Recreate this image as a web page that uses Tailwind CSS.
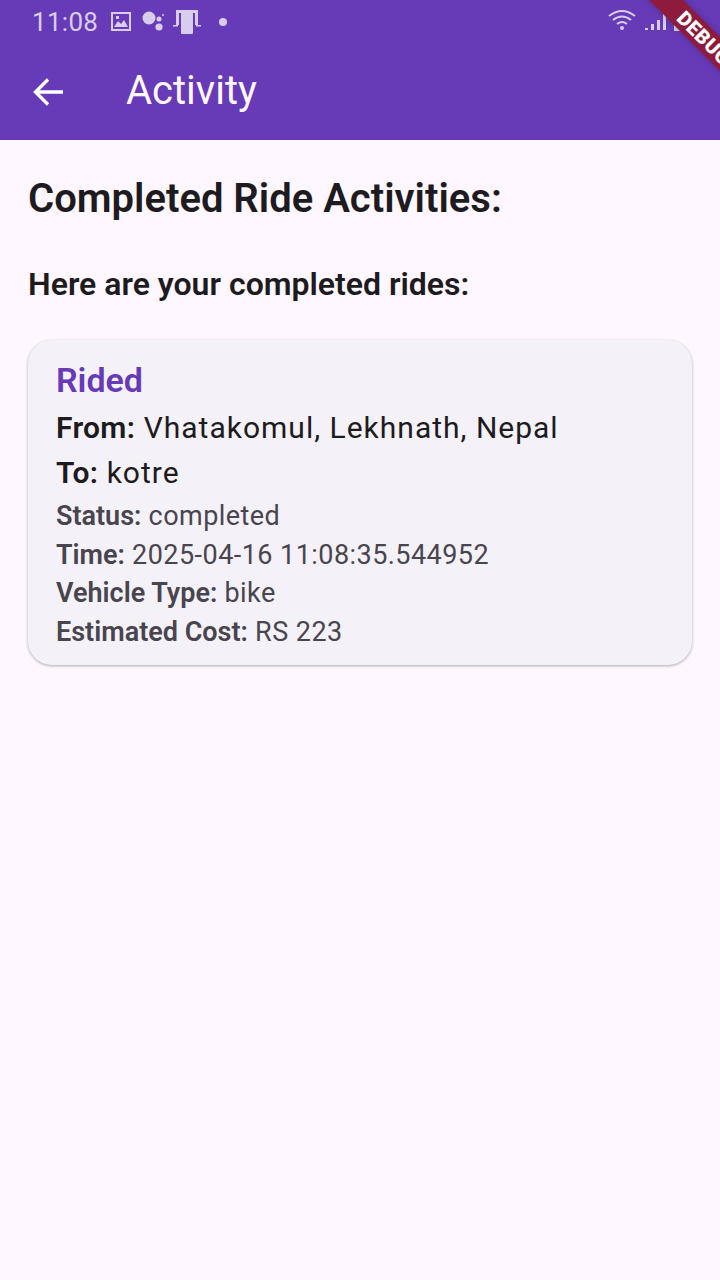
<!DOCTYPE html>
<html><head><meta charset="utf-8"><script src="https://cdn.jsdelivr.net/npm/@tailwindcss/browser@4"></script></head>
<body class="m-0">
<div class="relative w-[720px] h-[1280px] overflow-hidden bg-[#fef7ff] font-['Roboto',sans-serif] text-[#1d1b20]">
  <header class="h-[140px] bg-[#673ab7] flex flex-col">
    <div class="h-[44px] flex items-center pl-[32px] text-[#d9cdee]">
      <span class="text-[26px] leading-[44px] tracking-[0.3px]">11:08</span>
      <svg class="ml-[12px]" width="22" height="22" viewBox="0 0 22 22"><path fill="#d9cdee" fill-rule="evenodd" d="M1 1h20v19H1zM3 3v15h16V3zM4 16l4-6 3 3 3-4 4 7zM6 5h3v3H6z"/></svg>
      <svg class="ml-[9px]" width="24" height="24" viewBox="0 0 24 24"><circle cx="8" cy="8" r="6.5" fill="#d9cdee"/><circle cx="18" cy="17" r="3.6" fill="#d9cdee"/><circle cx="18" cy="9" r="2.5" fill="#d9cdee"/><circle cx="22" cy="5" r="1" fill="#d9cdee"/></svg>
      <svg class="ml-[8px]" width="28" height="26" viewBox="0 0 28 26"><path fill="#d9cdee" d="M3 1h22v15h-3V4H6v12H3zM0 16h5v1.500H0zM23 16h5v1.500h-5zM8 4h12v20q0 1-1 1H9q-1 0-1-1z"/></svg>
      <span class="ml-[18px] w-[8px] h-[8px] rounded-full bg-[#d9cdee]"></span>
    </div>
    <div class="h-[96px] flex items-center pl-[32px]">
      <svg width="34" height="34" viewBox="0 0 34 34" fill="none" stroke="#fff" stroke-width="3.400"><path d="M31 17H4M16 4.500 3.500 17 16 29.500"/></svg>
      <h1 class="ml-[60px] text-[40px] font-normal leading-[48px] text-[#fef7ff] -mt-[2px]">Activity</h1>
    </div>
  </header>
  <main class="px-[28px]">
    <h2 class="mt-[34px] text-[40px] leading-[50px] font-semibold tracking-[0px]">Completed Ride Activities:</h2>
    <h3 class="mt-[40px] text-[32px] leading-[40px] font-semibold">Here are your completed rides:</h3>
    <section class="mt-[36px] h-[325px] rounded-[24px] bg-[#f5f1f9] shadow-[0_1px_3px_rgba(0,0,0,0.32)] pl-[28px] pr-[28px] pt-[20px]">
      <p class="text-[34px] leading-[40px] font-semibold text-[#673ab7]">Rided</p>
      <p class="mt-[7px] text-[30px] leading-[42px] tracking-[1px]"><b class="font-semibold tracking-[0.3px]">From:</b> Vhatakomul, Lekhnath, Nepal</p>
      <p class="mt-[3px] text-[30px] leading-[42px] tracking-[1px]"><b class="font-semibold tracking-[0.3px]">To:</b> kotre</p>
      <div class="text-[#49454f] text-[27px] leading-[38.500px] tracking-[0.45px] mt-[3px]">
        <p><b class="font-semibold tracking-[0px]">Status:</b> completed</p>
        <p><b class="font-semibold tracking-[0px]">Time:</b> 2025-04-16 11:08:35.544952</p>
        <p><b class="font-semibold tracking-[0px]">Vehicle Type:</b> bike</p>
        <p><b class="font-semibold tracking-[0px]">Estimated Cost:</b> RS 223</p>
      </div>
    </section>
  </main>
  <!-- status icons at right -->
  <svg class="absolute left-[608px] top-[8px]" width="30" height="24" viewBox="0 0 30 24" fill="none" stroke="#d9cdee" stroke-width="2"><path d="M1 8q13-10 26 0M5 12q9-7 18 0M9 16q5-4 10 0"/><circle cx="14" cy="20" r="2" fill="#d9cdee" stroke="none"/></svg>
  <svg class="absolute left-[640px] top-[10px]" width="60" height="24" viewBox="0 0 60 24"><path fill="#d9cdee" d="M5 18h3v2H5zM11 14h3v6h-3zM17 10h3v10h-3zM23 0h3v20h-3z"/><path fill="#d9cdee" d="M34 3h4V0h6v3h4v18H34z"/></svg>
  <!-- debug ribbon -->
  <div class="absolute left-[612px] top-[26px] w-[184px] h-[24px] rotate-45 bg-[#8e1a3c] flex items-center justify-center shadow-[0_0_6px_rgba(0,0,0,0.25)]">
    <span class="text-white text-[20px] font-black leading-[24px] tracking-[0.5px]">DEBUG</span>
  </div>
</div>
</body></html>
